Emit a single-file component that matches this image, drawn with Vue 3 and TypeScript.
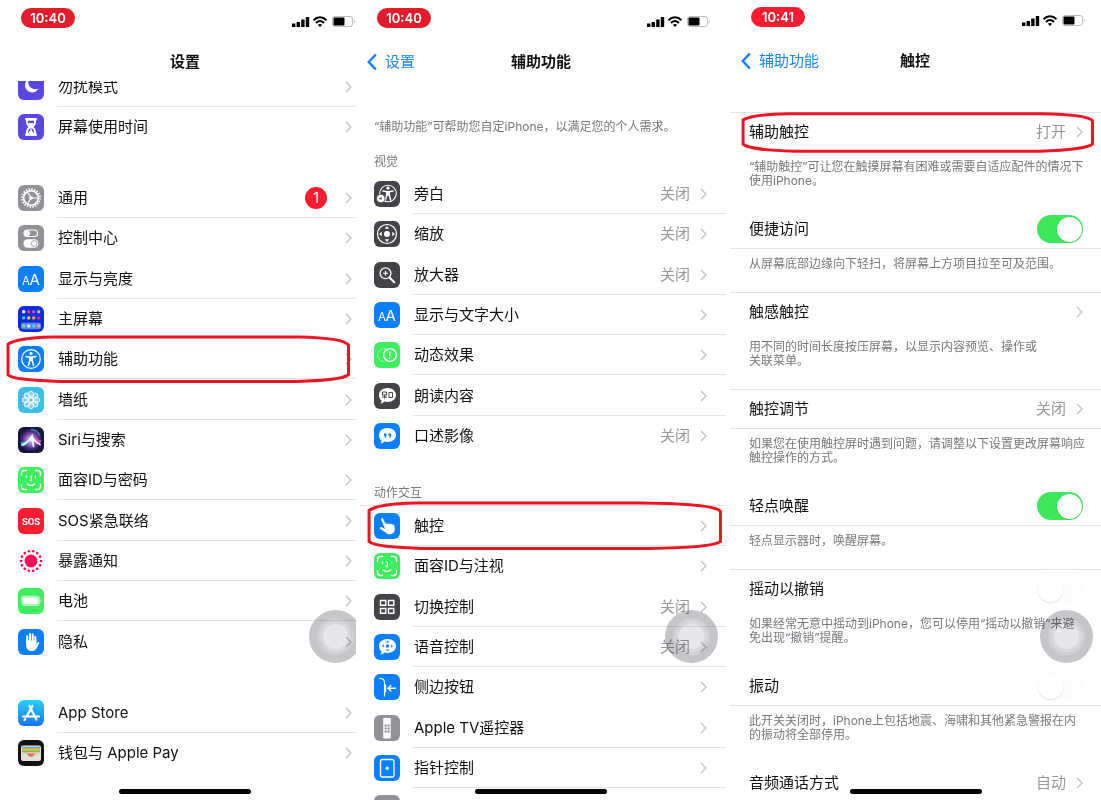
<script setup lang="ts">
import { reactive } from 'vue'

interface Row {
  label: string
  icon: string
  line?: boolean
  value?: string
  badge?: number
  marked?: boolean
}

interface Option {
  id: string
  label: string
  note: string
  value?: string
  toggle?: boolean
  top?: boolean
  bottom?: boolean
  marked?: boolean
}

const settingsGroups: Row[][] = [
  [
    { label: '勿扰模式', icon: 'moon', line: true },
    { label: '屏幕使用时间', icon: 'hourglass' },
  ],
  [
    { label: '通用', icon: 'gear', line: true, badge: 1 },
    { label: '控制中心', icon: 'control' },
    { label: '显示与亮度', icon: 'letters', line: true },
    { label: '主屏幕', icon: 'home' },
    { label: '辅助功能', icon: 'person', line: true, marked: true },
    { label: '墙纸', icon: 'flower', line: true },
    { label: 'Siri与搜索', icon: 'siri' },
    { label: '面容ID与密码', icon: 'face', line: true },
    { label: 'SOS紧急联络', icon: 'sos', line: true },
    { label: '暴露通知', icon: 'exposure', line: true },
    { label: '电池', icon: 'battery', line: true },
    { label: '隐私', icon: 'hand' },
  ],
  [
    { label: 'App Store', icon: 'store', line: true },
    { label: '钱包与 Apple Pay', icon: 'wallet' },
  ],
]

const accessGroups: { title: string; ruled: boolean; rows: Row[] }[] = [
  {
    title: '视觉',
    ruled: false,
    rows: [
      { label: '旁白', icon: 'voiceover', line: true, value: '关闭' },
      { label: '缩放', icon: 'zoom', value: '关闭' },
      { label: '放大器', icon: 'magnifier', line: true, value: '关闭' },
      { label: '显示与文字大小', icon: 'letters', line: true },
      { label: '动态效果', icon: 'motion', line: true },
      { label: '朗读内容', icon: 'spoken', line: true },
      { label: '口述影像', icon: 'quote', value: '关闭' },
    ],
  },
  {
    title: '动作交互',
    ruled: true,
    rows: [
      { label: '触控', icon: 'touch', line: true, marked: true },
      { label: '面容ID与注视', icon: 'face' },
      { label: '切换控制', icon: 'switch', line: true, value: '关闭' },
      { label: '语音控制', icon: 'voice', line: true, value: '关闭' },
      { label: '侧边按钮', icon: 'side' },
      { label: 'Apple TV遥控器', icon: 'remote', line: true },
      { label: '指针控制', icon: 'pointer', line: true },
      { label: '', icon: 'keyboard' },
    ],
  },
]

const options: Option[] = [
  { id: 'assistive', label: '辅助触控', value: '打开', top: true, marked: true, note: '“辅助触控”可让您在触摸屏幕有困难或需要自适应配件的情况下\n使用iPhone。' },
  { id: 'reach', label: '便捷访问', toggle: true, bottom: true, note: '从屏幕底部边缘向下轻扫，将屏幕上方项目拉至可及范围。' },
  { id: 'haptic', label: '触感触控', top: true, note: '用不同的时间长度按压屏幕，以显示内容预览、操作或\n关联菜单。' },
  { id: 'adjust', label: '触控调节', value: '关闭', top: true, bottom: true, note: '如果您在使用触控屏时遇到问题，请调整以下设置更改屏幕响应\n触控操作的方式。' },
  { id: 'tap', label: '轻点唤醒', toggle: true, bottom: true, note: '轻点显示器时，唤醒屏幕。' },
  { id: 'shake', label: '摇动以撤销', toggle: true, top: true, note: '如果经常无意中摇动到iPhone，您可以停用“摇动以撤销”来避\n免出现“撤销”提醒。' },
  { id: 'vibrate', label: '振动', toggle: true, bottom: true, note: '此开关关闭时，iPhone上包括地震、海啸和其他紧急警报在内\n的振动将全部停用。' },
  { id: 'audio', label: '音频通话方式', value: '自动', note: '' },
]

const switches = reactive<Record<string, boolean>>({ reach: true, tap: true, shake: false, vibrate: false })

const screens = [
  { key: 'first', time: '10:40', title: '设置', back: '' },
  { key: 'second', time: '10:40', title: '辅助功能', back: '设置' },
  { key: 'third', time: '10:41', title: '触控', back: '辅助功能' },
]

const bg = (fill: string) => `<rect width="26" height="26" rx="6" fill="${fill}"/>`
const blue = '#0a80ff'
const dark = '#454349'
const gray = '#929198'
const green = '#3eee5e'
const petals = [0, 45, 90, 135, 180, 225, 270, 315]
  .map((a) => `<ellipse cx="13" cy="7.6" rx="2.6" ry="3.4" transform="rotate(${a} 13 13)"/>`)
  .join('')
const man = '<circle cx="13" cy="7.6" r="1.7" fill="#fff"/><path d="M8 10.600l4 .6M18 10.600l-4 .6M12 13.500l-1.600 6M14 13.500l1.600 6" fill="none" stroke="#fff" stroke-width="1.500" stroke-linecap="round"/><path d="M11 10.500h4v4.800h-4z" fill="#fff"/>'
const bubble = '<path d="M13.500 5c5 0 8.500 3.100 8.500 7s-3.500 7-8.500 7c-1 0-2-.1-2.900-.4-1.200 1.300-2.800 1.900-4.300 1.900 .9-.9 1.300-2 1.100-3C5.900 16.200 5 14.300 5 12c0-3.900 3.500-7 8.500-7z" fill="#fff"/>'

const icons: Record<string, string> = {
  moon: bg('#5847e0') + '<path d="M11 4.500C8.500 6 7 8.300 7 11c0 4.200 3.300 7.400 7.300 7.400 2.700 0 4.700-1.200 6-3.600-5.300 1.300-9.800-1.400-10-6 0-1.500 .2-2.900 .7-4.300z" fill="#fff"/>',
  hourglass: bg('#5847e0') + '<path d="M8.300 5.200h9.400M8.300 20.800h9.400" stroke="#fff" stroke-width="2.600" stroke-linecap="round"/><path d="M8.900 5.500c0 4.500 .6 5.500 3 7.500-2.400 2-3 3-3 7.500h8.200c0-4.500-.6-5.500-3-7.500 2.400-2 3-3 3-7.500z" fill="none" stroke="#fff" stroke-width="2"/><path d="M10.500 9h5L13.600 13v3l2.600 4h-6.400l2.600-4v-3z" fill="#fff"/>',
  gear: bg(gray) + '<g fill="none" stroke="#fff"><circle cx="13" cy="13" r="9" stroke-width="1.800" stroke-dasharray="1.414 1.414"/><circle cx="13" cy="13" r="7.300" stroke-width="1.600"/><path d="M13 13h6.500M13 13l-3.500-6M13 13l-3.500 6" stroke-width="1.200"/></g><circle cx="13" cy="13" r="1.800" fill="#fff"/>',
  control: bg(gray) + '<rect x="6" y="5" width="13.500" height="6.500" rx="3.250" fill="none" stroke="#fff" stroke-width="1.200"/><circle cx="9.300" cy="8.250" r="2.800" fill="#fff"/><rect x="5.400" y="14.300" width="15" height="8.400" rx="4.200" fill="#fff"/><circle cx="16.200" cy="18.500" r="2.900" fill="none" stroke="#929198" stroke-width=".8"/>',
  letters: bg(blue) + '<g fill="#fff" font-family="Inter, sans-serif"><text x="4" y="18.500" font-size="11.500">A</text><text x="11.500" y="18.500" font-size="15">A</text></g>',
  home: bg('#0d2be0') + '<rect x="3" y="16.800" width="20" height="6.400" rx="2" fill="#5c84f2"/>' +
    [['#fff', '#f03a55', '#d24bea', '#a4d35a'], ['#37c8d8', '#ffd60a', '#ffa53a', '#f0294c'], ['#78e26a', '#e7efff', '#4ed4fa', '#ffab78']]
      .map((line, r) => line.map((c, i) => `<rect x="${4.2 + i * 5}" y="${[4.3, 10.4, 18.6][r]}" width="3" height="3" rx=".8" fill="${c}"/>`).join('')).join(''),
  person: bg(blue) + '<circle cx="13" cy="13" r="9.300" fill="none" stroke="#fff" stroke-width="1.200"/>' + man,
  flower: bg('#3dbdea') + `<g fill="#fff" fill-opacity=".35" stroke="#fff" stroke-width=".9">${petals}</g><circle cx="13" cy="13" r="2" fill="#3dbdea" stroke="#fff"/>`,
  siri: '<defs><radialGradient id="orb" cx=".5" cy=".5" r=".5"><stop offset="0" stop-color="#fff"/><stop offset=".3" stop-color="#b18be8"/><stop offset=".75" stop-color="#5a2a86"/><stop offset="1" stop-color="#1b1c42"/></radialGradient></defs>' + bg('#15163a') +
    '<circle cx="13" cy="13" r="11" fill="url(#orb)"/><path d="M2.500 15c4.500 0 7.500-1.500 11-6-1 6-5 10-9.500 10.500z" fill="#19b7dc" opacity=".9"/><path d="M13 9c4 1.500 7 4 10.500 4.500-2 5-7 4-10.500-4.500z" fill="#f05bb8" opacity=".85"/><path d="M4 18C9 16.500 11.500 13 14 9l1.500 10.500M14 9c1.500 4 4 6.500 8 8.500" fill="none" stroke="#f2fbff" stroke-width="1.700" stroke-linecap="round"/><path d="M13 2.500a10.500 10.500 0 0 1 9 6" stroke="#3585b5" fill="none" stroke-width="1.500"/>',
  face: bg(green) + '<g fill="none" stroke="#fff" stroke-width="1.400" stroke-linecap="round"><path d="M3.500 8.500V6.500a3 3 0 0 1 3-3h2M17.500 3.500h2a3 3 0 0 1 3 3v2M22.500 17.500v2a3 3 0 0 1-3 3h-2M8.500 22.500h-2a3 3 0 0 1-3-3v-2"/><path d="M8.500 9v1.500M17.500 9v1.500M13.300 9v4.500h-1.300M9.500 17c2 2 5 2 7 0"/></g>',
  sos: bg('#ff1c30') + '<text x="13" y="16.500" text-anchor="middle" fill="#fff" font-size="9.500" font-weight="700" font-family="Roboto, sans-serif">SOS</text>',
  exposure: '<rect x=".5" y=".5" width="25" height="25" rx="5.500" fill="#fff" stroke="#f4f4f6"/><circle cx="13" cy="13" r="6.400" fill="#ff0a55"/><circle cx="13" cy="13" r="10" fill="none" stroke="#ff0a55" stroke-width="2.700" stroke-linecap="round" pathLength="14" stroke-dasharray="0 1"/>',
  battery: bg(green) + '<rect x="3.700" y="8.200" width="17.600" height="9.200" rx="2.400" fill="#a5f6b2" stroke="#d9fbdf" stroke-width=".8"/><rect x="5.200" y="9.700" width="14.600" height="6.200" rx=".8" fill="#fff"/><path d="M22.600 11v3.600c1.200-.5 1.200-3.100 0-3.600z" fill="#fff"/>',
  hand: bg(blue) + '<path d="M9.200 14V7.200M12 13V5M14.700 13V5.600M17.300 14V8" stroke="#fff" stroke-width="2" stroke-linecap="round"/><path d="M8.200 11.500h10.100v3.700l1.400-1.900c.7-.9 2-.2 1.600 .8l-2.400 4.900c-1 2-2.600 3-5 3-3.600 0-5.700-2.200-5.700-5.800z" fill="#fff"/>',
  store: '<defs><linearGradient id="sky" x2="0" y2="1"><stop offset="0" stop-color="#20d5fd"/><stop offset="1" stop-color="#1a70f3"/></linearGradient></defs>' + bg('url(#sky)') +
    '<path d="M11.500 6l6.800 13.500M14.500 6L8.600 16.500M5 16.500h10M18.500 16.500H21M7.200 19l-.7 1.200" stroke="#fff" stroke-width="2.200" stroke-linecap="round" fill="none"/>',
  wallet: bg('#121214') + '<rect x="3" y="5.500" width="20" height="15.500" rx="2" fill="#e4e0d6"/><path d="M4 6.800h18v1.700H4z" fill="#4aa6d8"/><path d="M4 8.500h18v2H4z" fill="#e8b52b"/><path d="M4 10.500h18v2H4z" fill="#7fb93a"/><path d="M4 12.500h18v1.300H4z" fill="#ecc9b8"/><path d="M8.500 13.500h9c-1 .8-2 3.300-4.500 3.300s-3.500-2.500-4.500-3.300z" fill="#ee6a63"/>',
  voiceover: bg(dark) + '<circle cx="14" cy="12.500" r="8.300" fill="none" stroke="#fff" stroke-width="1.100"/><g transform="translate(1 -.5)">' + man + '</g><circle cx="6.800" cy="17.500" r="4.300" fill="#fff" stroke="#454349" stroke-width=".8"/><path d="M5.200 16.900h1l1.400-1.200v3.600l-1.400-1.200h-1z" fill="#454349"/>',
  zoom: bg(dark) + '<circle cx="13" cy="13" r="9.500" fill="none" stroke="#fff" stroke-width="1.200"/><g fill="#fff"><circle cx="13" cy="13" r="3"/><path d="M13 5l2.200 2.700h-4.400zM13 21l2.200-2.700h-4.400zM5 13l2.700-2.200v4.400zM21 13l-2.700-2.200v4.400z"/></g>',
  magnifier: bg(dark) + '<circle cx="11.500" cy="11.300" r="5.400" fill="none" stroke="#fff" stroke-width="1.300"/><path d="M9 11.300h5M11.500 8.800v5" stroke="#fff" stroke-width="1.100"/><path d="M15.600 15.500l4.600 4.800" stroke="#fff" stroke-width="2.200" stroke-linecap="round"/>',
  motion: bg(green) + '<g fill="none" stroke="#fff"><circle cx="9.800" cy="13" r="6.200" stroke-width=".9" stroke-dasharray="1 1.200"/><circle cx="16" cy="13" r="6.400" stroke-width="1.400"/><path d="M15.800 9.500v5M15.800 15.700v1.200" stroke-width="1"/></g>',
  spoken: bg(dark) + bubble + '<g fill="none" stroke="#454349" stroke-width="1"><path d="M8.500 9h4v3h-4zM8 14h5M10.500 12v3.500"/><path d="M15 9.500h3.500v5H15z"/></g>',
  quote: bg(blue) + bubble + '<path d="M10 10.500h2.600v2.200c0 1.300-.8 2-2 2.300v-1.200c.5-.2 .7-.5 .7-.9H10zM14.600 10.500h2.600v2.200c0 1.300-.8 2-2 2.300v-1.200c.5-.2 .7-.5 .7-.9h-1.300z" fill="#0a80ff"/>',
  touch: bg(blue) + '<path d="M8.200 6.200l3.400 8" stroke="#fff" stroke-width="2.200" stroke-linecap="round"/><path d="M10 10.500l2.200-.2 1.300 1c.7-1 2-1 2.600 0 .8-.8 2-.6 2.400 .4 1-.4 1.900 .2 2 1.300l.3 3.500c.1 2.300-2 4.700-4.700 4.800-2.300 .1-3.500-.6-4.900-2L6 15.700c-.9-1 .2-2.200 1.300-1.600l4 2z" fill="#fff"/>',
  switch: bg(dark) + '<g fill="none" stroke="#fff" stroke-width="1.400"><path d="M6.500 6.500h5.300v4.800H6.500zM14.500 6.500h5.300v4.800h-5.300zM6.500 14.500h5.300v4.800H6.500zM14.500 14.500h5.300v4.800h-5.300z"/></g>',
  voice: bg(blue) + bubble + '<g fill="#0a80ff"><circle cx="13.500" cy="12" r="1.700"/><path d="M13.500 6.700l1.800 1.800h-3.600zM13.500 17.300l1.800-1.800h-3.600zM8 12l1.800-1.800v3.600zM19 12l-1.800-1.800v3.600z"/></g>',
  side: bg(blue) + '<g fill="none" stroke="#fff" stroke-linecap="round"><path d="M5.500 4.500c3.500-.2 5 1.300 5 4.500v13" stroke-width="1.100"/><path d="M11.300 11v6.500" stroke-width="1.800"/><path d="M21.500 14.300h-7.500M16.800 11.500L14 14.300l2.800 2.800" stroke-width="1.400"/></g>',
  remote: bg(gray) + '<rect x="9.200" y="3" width="7.600" height="20.500" rx="1" fill="#fff"/><g fill="#8a898f"><rect x="10.600" y="9.500" width="2" height="2"/><rect x="13.600" y="9.500" width="2" height="2"/><rect x="10.600" y="12.500" width="2" height="2"/><rect x="13.600" y="12.500" width="2" height="2"/><rect x="10.600" y="15.500" width="2" height="2"/><rect x="13.600" y="15.500" width="2" height="2"/></g>',
  pointer: bg(blue) + '<rect x="6.500" y="4.500" width="13.500" height="17.500" rx="2" fill="none" stroke="#fff" stroke-width="1.300"/><circle cx="13.200" cy="13.200" r="1.700" fill="#fff"/>',
  keyboard: bg(gray),
}
</script>

<template>
  <main class="board">
    <section v-for="screen in screens" :key="screen.key" class="screen" :class="screen.key">
      <header class="top">
        <div class="status">
          <span class="time">{{ screen.time }}</span>
          <svg class="signals" width="64" height="14" viewBox="0 0 64 14" aria-hidden="true">
            <path d="M0 9.500h3.400V13H0zM4.600 8H8v5H4.600zM9.200 5.500h3.400V13H9.200zM13.800 3h3.400v10h-3.400z" />
            <path d="M21.500 6.200c3.800-3.900 9.200-3.900 13 0M24 8.900c2.500-2.300 5.500-2.300 8 0" fill="none" stroke="#000" stroke-width="2" />
            <path d="M25.900 10.700c1.300-1.100 2.900-1.100 4.200 0L28 12.900z" />
            <rect x="40.500" y="2.500" width="20" height="10" rx="2.500" fill="#fff" stroke="#bdbdbd" />
            <rect x="41.500" y="3.500" width="11" height="8" rx="1" />
            <path d="M62.300 6v3.200c1-.4 1-2.800 0-3.200z" fill="#a8a8a8" />
          </svg>
        </div>
        <nav class="bar">
          <a v-if="screen.back" class="back" href="#">
            <svg width="10" height="18" viewBox="0 0 10 18" aria-hidden="true">
              <path d="M8.800 1.500L1.800 9l7 7.500" fill="none" stroke="#0a80ff" stroke-width="2.400" />
            </svg>
            {{ screen.back }}
          </a>
          <h1 class="title">{{ screen.title }}</h1>
        </nav>
      </header>

      <div v-if="screen.key === 'first'" class="content">
        <div v-for="(group, g) in settingsGroups" :key="g" class="group">
          <a v-for="row in group" :key="row.label" class="row" href="#">
            <svg class="icon" viewBox="0 0 26 26" aria-hidden="true" v-html="icons[row.icon]"></svg>
            <span class="body" :class="{ line: row.line }">
              <span class="label">{{ row.label }}</span>
              <span v-if="row.badge" class="badge">{{ row.badge }}</span>
              <svg class="chevron" viewBox="0 0 7 12" aria-hidden="true"><path d="M1 1l5 5-5 5" /></svg>
            </span>
            <span v-if="row.marked" class="mark">
              <svg viewBox="0 0 343 47" preserveAspectRatio="none" aria-hidden="true">
                <path d="M2 9C8 5 26 2.500 46 2H292C318 2.500 338 5 341.500 10V39C336 43 315 45 290 45.500H52C26 44 8 43.500 2 39z" />
              </svg>
            </span>
          </a>
        </div>
      </div>

      <div v-else-if="screen.key === 'second'" class="content">
        <p class="intro">“辅助功能”可帮助您自定iPhone，以满足您的个人需求。</p>
        <template v-for="group in accessGroups" :key="group.title">
          <h2 class="caption" :class="{ ruled: group.ruled }">{{ group.title }}</h2>
          <div class="group">
            <a v-for="row in group.rows" :key="row.icon" class="row" href="#">
              <svg class="icon" viewBox="0 0 26 26" aria-hidden="true" v-html="icons[row.icon]"></svg>
              <span class="body" :class="{ line: row.line }">
                <span class="label">{{ row.label }}</span>
                <span v-if="row.value" class="value">{{ row.value }}</span>
                <svg class="chevron" viewBox="0 0 7 12" aria-hidden="true"><path d="M1 1l5 5-5 5" /></svg>
              </span>
              <span v-if="row.marked" class="mark">
                <svg viewBox="0 0 343 47" preserveAspectRatio="none" aria-hidden="true">
                  <path d="M2 9C8 5 26 2.500 46 2H265C310 2.500 338 5 341.500 10V39C336 43 315 45 272 45.500H52C26 44 8 43.500 2 39z" />
                </svg>
              </span>
            </a>
          </div>
        </template>
      </div>

      <div v-else class="content">
        <div v-for="option in options" :key="option.id" class="option">
          <div v-if="option.toggle" class="line-item" :class="{ over: option.top, under: option.bottom }">
            <label class="label" :for="option.id">{{ option.label }}</label>
            <input :id="option.id" v-model="switches[option.id]" class="toggle" type="checkbox" role="switch" />
          </div>
          <a v-else class="line-item" :class="{ over: option.top, under: option.bottom }" href="#">
            <span class="label">{{ option.label }}</span>
            <span v-if="option.value" class="value">{{ option.value }}</span>
            <svg class="chevron" viewBox="0 0 7 12" aria-hidden="true"><path d="M1 1l5 5-5 5" /></svg>
            <span v-if="option.marked" class="mark">
              <svg viewBox="0 0 343 47" preserveAspectRatio="none" aria-hidden="true">
                <path d="M2 9C8 5 26 2.500 46 2H292C318 2.500 338 5 341.500 10V37C336 42 315 44 290 45H52C26 44 8 42.500 2 37z" />
              </svg>
            </span>
          </a>
          <p v-if="option.note" class="note">{{ option.note }}</p>
        </div>
      </div>

      <span class="bubble"></span>
      <span class="indicator"></span>
    </section>
  </main>
</template>

<style>
body {
  margin: 0;
  background: #fff;
}
</style>

<style scoped>
.board {
  display: grid;
  grid-template-columns: 356fr 366fr 371fr;
  gap: 4px;
  height: 100vh;
  min-height: 640px;
  overflow: hidden;
  font-family: Inter, "Noto Sans CJK SC", sans-serif;
  font-size: 15px;
  line-height: 20px;
  color: #111;
}

.screen {
  --lead: 14px;
  --trail: 19px;
  --edge: 15px;
  --pill: 17px;
  position: relative;
  display: flex;
  flex-direction: column;
  min-width: 0;
  overflow: hidden;
  background: #fff;
}

.first {
  --lead: 18px;
  --trail: 4px;
  --edge: 0px;
  --pill: 21px;
}

.third {
  --lead: 19px;
  --trail: 18px;
  --pill: 21px;
}

.top {
  flex: none;
  padding-top: 8px;
}

.third .top {
  padding-top: 7px;
}

.status {
  display: flex;
  justify-content: space-between;
  padding: 0 var(--edge) 0 var(--pill);
}

.time {
  width: 54px;
  height: 20px;
  border-radius: 10px;
  background: #e31c2b;
  color: #fff;
  font-size: 13px;
  font-weight: 600;
  text-align: center;
}

.third .time {
  background: #f91c30;
}

.signals {
  margin-top: 6px;
}

.bar {
  display: grid;
  grid-template-columns: 1fr auto 1fr;
  align-items: center;
  height: 20px;
  padding: 24px 4px 9px 7px;
}

.first .bar {
  padding-left: 18px;
}

.second .bar {
  padding-right: 11px;
}

.third .bar {
  padding-left: 11px;
  padding-right: 12px;
}

.back {
  display: flex;
  align-items: center;
  gap: 8px;
  color: #1a86f5;
  text-decoration: none;
}

.title {
  grid-column: 2;
  margin: 0;
  font-size: 15px;
  font-weight: 600;
  line-height: 20px;
}

.content {
  flex: 1;
  min-height: 0;
  overflow: hidden;
}

.group + .group {
  margin-top: 31px;
}

.first .group:first-child {
  margin-top: -14px;
}

.row {
  position: relative;
  display: flex;
  align-items: center;
  gap: 13px;
  height: 40px;
  padding-left: var(--lead);
  color: inherit;
  text-decoration: none;
}

.row:nth-child(3n) {
  height: 41px;
}

.icon {
  flex: none;
  width: 26px;
  height: 26px;
}

.body {
  flex: 1;
  align-self: stretch;
  display: flex;
  align-items: center;
  padding: 1px var(--trail) 0 1px;
  border-bottom: 1px solid transparent;
}

.body.line {
  border-bottom-color: #e4e4e6;
}

.label {
  flex: 1;
}

.value {
  margin-right: 10px;
  color: #97979c;
}

.chevron {
  flex: none;
  width: 7px;
  height: 12px;
  fill: none;
  stroke: #c6c6ca;
  stroke-width: 1.5;
}

.badge {
  width: 22px;
  height: 22px;
  margin-right: 18px;
  border-radius: 50%;
  background: #ff1c30;
  color: #fff;
  line-height: 22px;
  text-align: center;
}

.mark {
  position: absolute;
  z-index: 1;
  inset: -4px 6px -4px 6px;
  pointer-events: none;
}

.second .mark {
  inset: -5px 4px -4px 7px;
}

.third .mark {
  inset: -1px 7px -2px 11px;
}

.mark svg {
  display: block;
  width: 100%;
  height: 100%;
}

.mark path {
  fill: none;
  stroke: #ee1522;
  stroke-width: 3;
  vector-effect: non-scaling-stroke;
}

.intro,
.caption,
.note {
  margin: 0;
  color: #77777d;
  font-size: 12px;
  font-weight: 400;
  line-height: 14px;
}

.intro {
  padding: 39px 8px 21px var(--lead);
}

.caption {
  padding: 0 0 4px var(--lead);
  border-bottom: 1px solid transparent;
}

.caption.ruled {
  padding-top: 30px;
  padding-bottom: 5px;
  border-bottom-color: #e8e8ea;
}

.third .content {
  padding-top: 32px;
}

.line-item {
  position: relative;
  display: flex;
  align-items: center;
  height: 38px;
  padding: 0 var(--trail) 0 var(--lead);
  border: solid transparent;
  border-width: 1px 0;
  color: inherit;
  text-decoration: none;
}

.line-item.over {
  border-top-color: #e4e4e6;
}

.line-item.under {
  border-bottom-color: #e4e4e6;
}

.note {
  padding: 8px 8px 21px var(--lead);
  white-space: pre-line;
}

.toggle {
  appearance: none;
  display: flex;
  align-items: center;
  width: 46px;
  height: 28px;
  margin: 0;
  padding: 1px;
  box-sizing: border-box;
  border-radius: 14px;
  background: #fefdfe;
}

.toggle::before {
  content: "";
  width: 25px;
  height: 25px;
  border-radius: 50%;
  background: #fff;
  box-shadow: 0 1px 2px rgba(0, 0, 0, 0.12);
}

.toggle:checked {
  justify-content: flex-end;
  background: #3de95b;
}

.bubble {
  position: absolute;
  z-index: 2;
  top: 610px;
  right: 8px;
  width: 53px;
  height: 53px;
  border-radius: 50%;
  background: radial-gradient(
    circle closest-side,
    #e9e7ec 0 12px,
    #dad8dd 13px 15px,
    #d2d0d5 16px 18px,
    #c7c5ca 19px 27px
  );
  mix-blend-mode: multiply;
  pointer-events: none;
}

.first .bubble {
  right: -6px;
}

.indicator {
  position: absolute;
  z-index: 2;
  bottom: 6px;
  left: 50%;
  width: 132px;
  height: 5px;
  margin-left: -66px;
  border-radius: 3px;
  background: #000;
}

.first .indicator {
  margin-left: -59px;
}

.second .indicator {
  margin-left: -68px;
}
</style>
